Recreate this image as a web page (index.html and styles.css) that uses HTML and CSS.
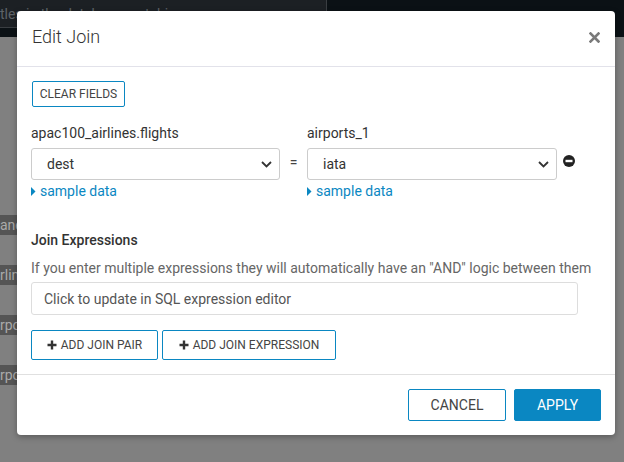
FILE: index.html
```html
<!DOCTYPE html>
<html>
<head>
<meta charset="utf-8">
<link rel="stylesheet" href="styles.css">
</head>
<body>
<div class="topbar">
  <div class="search"><span class="search-text">tles in the database matching</span><span class="search-dot"></span></div>
</div>
<div class="sidelist">
  <div class="side-item">ane</div>
  <div class="side-item">rlin</div>
  <div class="side-item">rpo</div>
  <div class="side-item">rpo</div>
</div>

<div class="modal">
  <div class="modal-header">
    <h4 class="modal-title">Edit Join</h4>
    <svg class="close" width="11" height="11" viewBox="0 0 11 11"><path d="M1.5 1.5 L9.5 9.5 M9.5 1.5 L1.5 9.5" stroke="#7a7a7a" stroke-width="2.6" stroke-linecap="square"/></svg>
  </div>
  <div class="modal-body">
    <button class="btn btn-clear">CLEAR FIELDS</button>
    <div class="pair">
      <div class="col">
        <div class="label">apac100_airlines.flights</div>
        <div class="select"><span>dest</span><svg width="11" height="7" viewBox="0 0 11 7"><path d="M1 1 L5.5 5.5 L10 1" fill="none" stroke="#333" stroke-width="1.8"/></svg></div>
        <a class="sample"><svg width="5" height="9" viewBox="0 0 5 9"><path d="M0 0 L4.5 4.5 L0 9 Z" fill="#0a87c2"/></svg>sample data</a>
      </div>
      <div class="eq">=</div>
      <div class="col">
        <div class="label">airports_1</div>
        <div class="select"><span>iata</span><svg width="11" height="7" viewBox="0 0 11 7"><path d="M1 1 L5.5 5.5 L10 1" fill="none" stroke="#333" stroke-width="1.8"/></svg></div>
        <a class="sample"><svg width="5" height="9" viewBox="0 0 5 9"><path d="M0 0 L4.5 4.5 L0 9 Z" fill="#0a87c2"/></svg>sample data</a>
      </div>
      <svg class="minus" width="12" height="12" viewBox="0 0 12 12"><circle cx="6" cy="6" r="6" fill="#222"/><rect x="2.5" y="4.8" width="7" height="2.4" fill="#fff"/></svg>
    </div>
    <div class="section-title">Join Expressions</div>
    <div class="desc">If you enter multiple expressions they will automatically have an "AND" logic between them</div>
    <div class="expr-input">Click to update in SQL expression editor</div>
    <div class="add-row">
      <button class="btn btn-add"><svg width="10" height="10" viewBox="0 0 10 10"><path d="M5 0.5 V9.5 M0.5 5 H9.5" stroke="#333" stroke-width="2.4"/></svg>ADD JOIN PAIR</button>
      <button class="btn btn-add btn-expr"><svg width="10" height="10" viewBox="0 0 10 10"><path d="M5 0.5 V9.5 M0.5 5 H9.5" stroke="#333" stroke-width="2.4"/></svg>ADD JOIN EXPRESSION</button>
    </div>
  </div>
  <div class="modal-footer">
    <button class="btn btn-cancel">CANCEL</button>
    <button class="btn btn-apply">APPLY</button>
  </div>
</div>
</body>
</html>
```

FILE: styles.css
```css
* { box-sizing: border-box; }
html, body {
  margin: 0;
  padding: 0;
  width: 624px;
  height: 462px;
  overflow: hidden;
}
body {
  background: #808080;
  font-family: Roboto, "Liberation Sans", sans-serif;
  position: relative;
}
.topbar {
  height: 37px;
  background: #0b1115;
}
.search {
  width: 327px;
  height: 28px;
  background: #1c2024;
  border: 1px solid #3a3e42;
  border-top: none;
  border-left: none;
  display: flex;
  align-items: center;
  justify-content: space-between;
  padding: 0 6px 0 0;
  overflow: hidden;
}
.search-text {
  color: #5e6368;
  font-size: 14px;
  white-space: nowrap;
}
.search-dot {
  width: 12px;
  height: 12px;
  border-radius: 50%;
  background: #6a6e72;
  margin-top: 6px;
}
.sidelist {
  display: flex;
  flex-direction: column;
  gap: 30px;
  padding-top: 178px;
}
.side-item {
  height: 20px;
  width: 120px;
  background: #555;
  color: #aaa;
  font-size: 14px;
  line-height: 20px;
  white-space: nowrap;
}
.modal {
  position: absolute;
  left: 17px;
  top: 11px;
  width: 598px;
  background: #fff;
  border-radius: 4px;
  box-shadow: 0 2px 6px rgba(0,0,0,0.3);
  color: #333;
}
.modal-header {
  height: 56px;
  border-bottom: 1px solid #e2e2ea;
  display: flex;
  align-items: center;
  justify-content: space-between;
  padding: 0 15px 4px 15px;
}
.modal-title {
  margin: 0;
  font-size: 18px;
  font-weight: 300;
  color: #333;
}
.close { margin-top: 2px; }
.modal-body {
  padding: 14px;
}
.btn {
  font-family: Roboto, "Liberation Sans", sans-serif;
  background: #fff;
  border: 1px solid #0a87c2;
  border-radius: 2px;
  color: #444;
  cursor: pointer;
  display: inline-flex;
  align-items: center;
  justify-content: center;
  padding: 0;
}
.btn-clear {
  width: 93px;
  height: 26px;
  font-size: 12px;
  margin-left: 1px;
}
.pair {
  display: flex;
  align-items: flex-start;
  margin-top: 16px;
}
.col {
  width: 249px;
  display: flex;
  flex-direction: column;
}
.col + .eq + .col { width: 250px; }
.label {
  font-size: 14px;
  line-height: 20px;
  color: #333;
}
.select {
  margin-top: 5px;
  height: 32px;
  border: 1px solid #ccc;
  border-radius: 3px;
  display: flex;
  align-items: center;
  justify-content: space-between;
  padding: 0 7px 0 15px;
  font-size: 14px;
  color: #333;
}
.eq {
  width: 27px;
  text-align: center;
  font-size: 14px;
  color: #444;
  margin-top: 31px;
}
.sample {
  margin-top: 3px;
  font-size: 14px;
  line-height: 16px;
  color: #0a87c2;
  display: flex;
  align-items: center;
  gap: 4px;
}
.minus {
  margin-left: 6px;
  margin-top: 32px;
}
.section-title {
  margin-top: 31px;
  font-size: 14px;
  line-height: 20px;
  font-weight: 500;
  color: #333;
}
.desc {
  margin-top: 8px;
  font-size: 14px;
  line-height: 20px;
  color: #666;
}
.expr-input {
  margin-top: 4px;
  width: 547px;
  height: 33px;
  border: 1px solid #ddd;
  border-radius: 3px;
  font-size: 14px;
  color: #555;
  display: flex;
  align-items: center;
  padding-left: 12px;
}
.add-row {
  margin-top: 15px;
  display: flex;
  gap: 4px;
}
.btn-add {
  height: 30px;
  width: 127px;
  font-size: 12px;
  gap: 4px;
}
.btn-expr { width: 174px; }
.modal-footer {
  border-top: 1px solid #e0e0e0;
  padding: 14px 14px 14px 14px;
  display: flex;
  justify-content: flex-end;
  gap: 8px;
}
.btn-cancel, .btn-apply {
  height: 32px;
  font-size: 14px;
}
.btn-cancel { width: 98px; }
.btn-apply {
  width: 87px;
  background: #0a87c2;
  color: #fff;
  border-color: #0a87c2;
}
```
